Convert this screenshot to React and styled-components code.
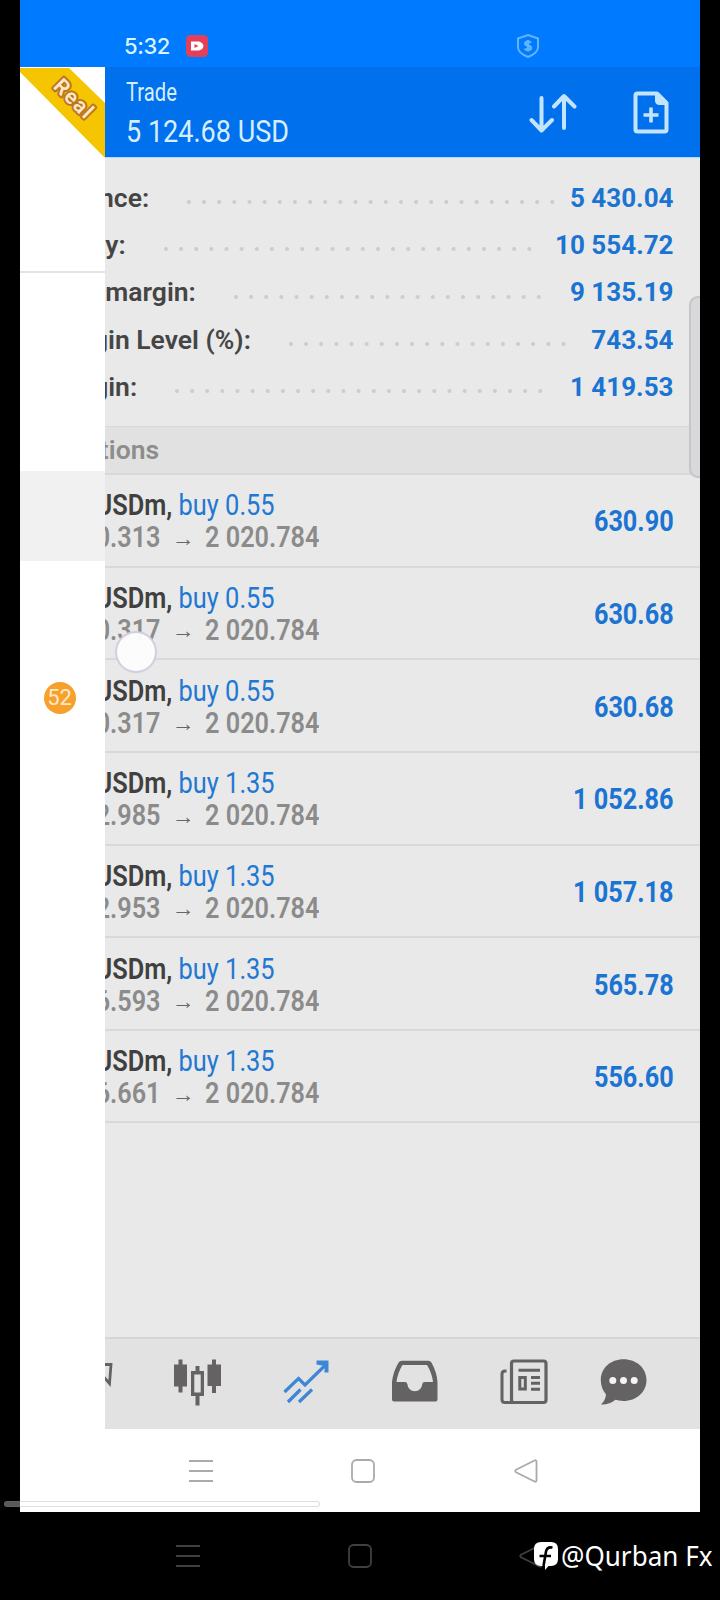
import React from 'react';
import styled, { createGlobalStyle } from 'styled-components';

const summary = [
	{ label: 'nce:', end: 44, dots: 25, value: '5 430.04' },
	{ label: 'ty:', end: 21, dots: 25, value: '10 554.72' },
	{ label: 'margin:', end: 91, dots: 21, value: '9 135.19' },
	{ label: 'gin Level (%):', end: 146, dots: 19, value: '743.54' },
	{ label: 'gin:', end: 32, dots: 25, value: '1 419.53' }
];

const positions = [
	{ volume: '0.55', open: '0.313', profit: '630.90' },
	{ volume: '0.55', open: '0.317', profit: '630.68' },
	{ volume: '0.55', open: '0.317', profit: '630.68' },
	{ volume: '1.35', open: '2.985', profit: '1 052.86' },
	{ volume: '1.35', open: '2.953', profit: '1 057.18' },
	{ volume: '1.35', open: '6.593', profit: '565.78' },
	{ volume: '1.35', open: '6.661', profit: '556.60' }
];

const RecordIcon = () => (
	<svg width="22" height="22" viewBox="0 0 22 22">
		<rect width="22" height="22" rx="4.5" fill="#e2405a" />
		<path d="M5 6.500h8q4 1 4.500 4.500-.5 3.500-4.500 4.500H5z" fill="#fff" />
		<path d="M8.500 9l4 2-4 2z" fill="#e2405a" />
	</svg>
);

const ShieldIcon = () => (
	<svg width="24" height="26" viewBox="0 0 24 26" fill="none" stroke="#62b4ff" strokeWidth="2">
		<path d="M12 2l10 3.500v9c0 4-4 7-10 9.500-6-2.500-10-5.500-10-9.500v-9z" />
		<path d="M14.800 9.800c-.5-1.300-5.600-1.700-5.600 1 0 2.400 5.800 1.400 5.800 4 0 2.900-5.400 2.400-6 .7M12 7v11.500" strokeWidth="2.400" />
	</svg>
);

const SortIcon = () => (
	<svg width="48" height="42" viewBox="0 0 48 42" fill="none" stroke="#c3e4ff" strokeWidth="4" strokeLinecap="round" strokeLinejoin="round">
		<path d="M12.500 6v32M2.500 28l10 10.500L23 28" />
		<path d="M35 36V4.500M25 14.500L35 4l10.500 10.500" />
	</svg>
);

const NewOrderIcon = () => (
	<svg width="36" height="43" viewBox="0 0 36 43" fill="none" stroke="#c3e4ff" strokeWidth="4" strokeLinejoin="round">
		<path d="M24 2.500H4.500q-2 0-2 2v34q0 2 2 2h27q2 0 2-2V12z" />
		<path d="M22.500 3v7q0 3.500 3.500 3.500h7z" fill="#c3e4ff" strokeWidth="1" />
		<path d="M18 16.500v15M10.500 24h15" strokeWidth="3.600" />
	</svg>
);

const QuotesIcon = () => (
	<svg width="8" height="50" viewBox="0 0 8 50" fill="none" stroke="#646263" strokeWidth="2.800">
		<path d="M-3 7.500H6L4.500 26.500L-2 19" />
	</svg>
);

const ChartIcon = () => (
	<svg width="50" height="50" viewBox="0 0 50 50" fill="#646263">
		<path d="M6.500 2.500h4v5h4.500v22h-4.500v6h-4v-6H2v-22h4.500z" />
		<path d="M40 2.500h4v5h5v21.500h-5v7h-4v-7h-4.500V7.500H40z" />
		<path d="M23.500 9h4v5h4.500v25h-4.500v9.500h-4V39H19V14h4.500zM22.300 17.500v18h6.400v-18z" fillRule="evenodd" />
	</svg>
);

const TradeIcon = () => (
	<svg width="50" height="50" viewBox="0 0 50 50" fill="none" stroke="#3d87d8" strokeWidth="3.200">
		<path d="M3.500 35L17.500 21.500L24 28L44 8.500" />
		<path d="M7 45L19.500 32.500M18 45L31 32.500" />
		<path d="M35.500 3.500H47.500V15.500H43.500V9L35.500 7.500z" fill="#3d87d8" stroke="none" />
	</svg>
);

const InboxIcon = () => (
	<svg width="50" height="50" viewBox="0 0 50 50" fill="#646263">
		<path
			fillRule="evenodd"
			d="M12 3.800H38q2.500 0 3.600 2Q47 16 47.500 25V42.500q0 2-2 2H4q-2 0-2-2V25Q3 15 8.500 5.800q1-2 3.500-2zM12.500 8Q7.500 16 6.500 25H15q2 0 2.300 2 1 7.200 7.500 7.200t7.500-7.200q.3-2 2.300-2H43Q42 16 37 8z"
		/>
	</svg>
);

const NewsIcon = () => (
	<svg width="50" height="50" viewBox="0 0 50 50" fill="none" stroke="#646263" strokeWidth="3.200">
		<rect x="12.500" y="4" width="34.500" height="41.500" rx="2.500" />
		<path d="M7.500 14H6q-3 0-3 3v25.500q0 3 3 3h9" strokeWidth="3" />
		<path d="M19.500 13.200H41M32 20.500h9M32 26.300h9M32 32.200h9" strokeWidth="3" />
		<rect x="20.800" y="20.500" width="5.500" height="11.500" strokeWidth="3" />
	</svg>
);

const ChatIcon = () => (
	<svg width="50" height="50" viewBox="0 0 50 50" fill="#646263">
		<path d="M24.500 2.200C37.500 2.200 47.500 11 47.500 23S37.500 44 24.500 44q-5-.2-8-1.200Q10 48 2 47.500 6.500 43.500 7 37.500 1.800 31 1.800 23C1.800 11 11.500 2.200 24.500 2.200z" />
		<g fill="#f4f4f4">
			<circle cx="13.800" cy="23.500" r="3.500" />
			<circle cx="24.500" cy="23.500" r="3.500" />
			<circle cx="35.200" cy="23.500" r="3.500" />
		</g>
	</svg>
);

const MenuKey = () => (
	<svg width="24" height="24" viewBox="0 0 24 24" fill="none" stroke="currentColor" strokeWidth="2">
		<path d="M0 2h24M0 12h24M0 22h24" />
	</svg>
);

const HomeKey = () => (
	<svg width="24" height="24" viewBox="0 0 24 24" fill="none" stroke="currentColor" strokeWidth="1.800">
		<rect x="1" y="1" width="22" height="22" rx="4.500" />
	</svg>
);

const BackKey = () => (
	<svg width="24" height="24" viewBox="0 0 24 24" fill="none" stroke="currentColor" strokeWidth="1.800" strokeLinejoin="round">
		<path d="M2 10.800L20.500 1.500q2-.8 2 1.200v18.600q0 2-2 1.200L2 13.200q-1.500-1.200 0-2.400z" />
	</svg>
);

const RibbonCorner = () => (
	<svg width="85" height="92" viewBox="0 0 85 92">
		<path d="M0 1H49L85 36V91L0 5z" fill="#f4c500" />
		<text
			transform="translate(54 32) rotate(45)"
			textAnchor="middle"
			dominantBaseline="central"
			fontFamily="Roboto, sans-serif"
			fontSize="21"
			fontWeight="600"
			letterSpacing="1.500"
			fill="#ffe9c9"
			stroke="#bd7620"
			strokeWidth="4"
			paintOrder="stroke"
			strokeLinejoin="round"
		>
			Real
		</text>
	</svg>
);

const PageLogo = () => (
	<svg width="26" height="28" viewBox="0 0 26 28">
		<path d="M8 0h10q7 0 7 7v10q0 7-7 7h-2.500L12 28V24H8q-7 0-7-7V7q0-7 7-7z" fill="#fff" />
		<path d="M19.500 5.500q-5.500-1-6.500 4L10.500 24M6.500 14H18" fill="none" stroke="#000" strokeWidth="2.600" />
	</svg>
);

export default function App() {
	return (
		<React.Fragment>
			<GlobalStyle />
			<Screen>
				<Phone>
					<StatusBar>
						<Clock>5:32</Clock>
						<RecordIcon />
						<ShieldSlot>
							<ShieldIcon />
						</ShieldSlot>
					</StatusBar>

					<Body>
						<Drawer>
							<DrawerHead>
								<RibbonCorner />
							</DrawerHead>
							<DrawerItem />
							<Badge>52</Badge>
						</Drawer>

						<Main>
							<AppBar>
								<Heading>
									<Title>Trade</Title>
									<Total>5 124.68 USD</Total>
								</Heading>
								<SortIcon />
								<NewOrderIcon />
							</AppBar>

							<Summary>
								{summary.map(row => (
									<SummaryRow key={row.value}>
										<Clip $width={row.end}>
											<Label>{row.label}</Label>
										</Clip>
										<Dots $count={row.dots} />
										<Amount>{row.value}</Amount>
									</SummaryRow>
								))}
							</Summary>

							<SectionTitle>
								<Clip $width={54}>
									<Label $muted>tions</Label>
								</Clip>
							</SectionTitle>

							{positions.map((p, i) => (
								<Position key={i}>
									<div>
										<Clip $width={170}>
											<Symbol>
												USDm, <span>buy {p.volume}</span>
											</Symbol>
										</Clip>
										<Prices>
											<Clip $width={56}>
												<Price>{p.open}</Price>
											</Clip>
											<Arrow>→</Arrow>
											<Clip $width={118}>
												<Price>2 020.784</Price>
											</Clip>
										</Prices>
									</div>
									<Profit>{p.profit}</Profit>
								</Position>
							))}

							<TabBar>
								<QuotesIcon />
								<ChartIcon />
								<TradeIcon />
								<InboxIcon />
								<NewsIcon />
								<ChatIcon />
							</TabBar>
						</Main>
					</Body>

					<KeyBar>
						<MenuKey />
						<HomeKey />
						<BackKey />
					</KeyBar>
				</Phone>

				<OuterKeys>
					<MenuKey />
					<HomeKey />
					<BackKey />
				</OuterKeys>

				<EdgeHandle />
				<Touch />
				<Progress />
				<Watermark>
					<PageLogo />
					<span>@Qurban Fx</span>
				</Watermark>
			</Screen>
		</React.Fragment>
	);
}

const GlobalStyle = createGlobalStyle`
	* {
		box-sizing: border-box;
	}
	body {
		margin: 0;
		background: #000;
		font-family: Roboto, sans-serif;
	}
	svg {
		display: block;
		flex: none;
	}
`;

const Screen = styled.div`
	position: relative;
	width: 720px;
	height: 1600px;
	overflow: hidden;
	background: #000;
`;

const Phone = styled.div`
	display: flex;
	flex-direction: column;
	width: 680px;
	height: 1512px;
	margin: 0 20px;
	background: #fff;
`;

const StatusBar = styled.div`
	display: flex;
	align-items: center;
	height: 67px;
	padding: 24px 0 0 104px;
	background: #007aff;
`;

const Clock = styled.div`
	width: 62px;
	color: #d8f4ff;
	font-family: Inter, sans-serif;
	font-size: 22px;
	font-weight: 550;
	letter-spacing: -.4px;
`;

const ShieldSlot = styled.div`
	margin-left: 308px;
`;

const Body = styled.div`
	display: flex;
	height: 1362px;
`;

const Drawer = styled.div`
	display: flex;
	flex-direction: column;
	flex: none;
	width: 85px;
`;

const DrawerHead = styled.div`
	height: 206px;
	border-bottom: 2px solid #e3e3e3;
`;

const DrawerItem = styled.div`
	height: 90px;
	margin-top: 198px;
	background: #f1f1f1;
`;

const Badge = styled.div`
	width: 32px;
	height: 32px;
	margin: 121px 0 0 23.5px;
	border-radius: 50%;
	background: #f7a02c;
	color: #ffe9c4;
	font-size: 22px;
	line-height: 32px;
	text-align: center;
`;

const Main = styled.div`
	display: flex;
	flex-direction: column;
	width: 595px;
	background: #e9e9e9;
`;

const AppBar = styled.div`
	display: flex;
	align-items: center;
	flex: none;
	height: 91px;
	padding: 1px 31px 0 21px;
	background: #0070ec;
	border-bottom: 1px solid #a5dcff;
	color: #d5eeff;
	svg + svg {
		margin-left: 56px;
	}
`;

const Heading = styled.div`
	flex: 1;
	padding-top: 2px;
`;

const Title = styled.div`
	font-size: 25px;
	line-height: 34px;
	transform: scaleX(.81);
	transform-origin: left;
`;

const Total = styled.div`
	font-size: 32px;
	line-height: 42px;
	white-space: nowrap;
	transform: scaleX(.845);
	transform-origin: left;
`;

const Summary = styled.div`
	flex: none;
	height: 268px;
	padding: 16px 26.5px 0 0;
`;

const SummaryRow = styled.div`
	display: flex;
	align-items: center;
	height: 47.3px;
`;

/* text keeps to the right edge, whatever the drawer covers is cut off */
const Clip = styled.div`
	display: flex;
	justify-content: flex-end;
	flex: none;
	width: ${props => props.$width}px;
	overflow: hidden;
`;

const Label = styled.span`
	flex: none;
	color: ${props => (props.$muted ? '#8d8d8d' : '#454545')};
	font-size: 26px;
	font-weight: 650;
	line-height: 36px;
	white-space: nowrap;
	transform: scaleX(1.02);
	transform-origin: right;
`;

const Dots = styled.div`
	width: ${props => props.$count * 15.15 - 10}px;
	height: 4px;
	margin: 9px 0 0 38px;
	background: radial-gradient(circle at 2px 2px, #cdcdcd 1.6px, transparent 2.3px) 0 0 / 15.15px 4px;
`;

const Amount = styled.span`
	margin-left: auto;
	color: #1b74d2;
	font-size: 26px;
	font-weight: 700;
	white-space: nowrap;
`;

const SectionTitle = styled.div`
	display: flex;
	align-items: center;
	flex: none;
	height: 49px;
	border-top: 1px solid #d8d8d8;
	border-bottom: 2px solid #d8d8d8;
	background: #e1e1e1;
`;

const Position = styled.div`
	display: flex;
	align-items: center;
	justify-content: space-between;
	flex: none;
	height: 92.65px;
	padding: 2px 26.5px 0 0;
	border-bottom: 2px solid #d9d9d9;
`;

const Symbol = styled.span`
	flex: none;
	color: #404040;
	font-size: 29px;
	font-weight: 600;
	line-height: 32px;
	white-space: nowrap;
	transform: scaleX(.875);
	transform-origin: right;
	span {
		color: #2178d2;
		font-weight: 450;
	}
`;

const Prices = styled.div`
	display: flex;
	align-items: center;
	height: 32px;
`;

const Price = styled.span`
	flex: none;
	color: #8b8b8b;
	font-size: 29px;
	font-weight: 600;
	line-height: 32px;
	white-space: nowrap;
	transform: scaleX(.87);
	transform-origin: right;
`;

const Arrow = styled.span`
	width: 40px;
	padding: 2px 0 0 4px;
	color: #666;
	font-family: "Liberation Sans", sans-serif;
	font-size: 23px;
	font-weight: 700;
	text-align: center;
`;

const Profit = styled.span`
	color: #1b74d2;
	font-size: 29px;
	font-weight: 700;
	white-space: nowrap;
	transform: scaleX(.87);
	transform-origin: right;
`;

const TabBar = styled.div`
	display: flex;
	flex: none;
	height: 92px;
	margin-top: auto;
	padding-top: 18px;
	border-top: 2px solid #d5d5d5;
	background: #e2e2e2;
	svg + svg {
		margin-left: 59px;
	}
	svg:nth-child(5) {
		margin-left: 58.5px;
	}
	svg:last-child {
		margin-left: 50px;
	}
`;

const KeyBar = styled.div`
	display: flex;
	justify-content: space-between;
	width: 349px;
	margin: 30px 0 0 168.5px;
	color: #aaa;
`;

const OuterKeys = styled.div`
	display: flex;
	justify-content: space-between;
	width: 367px;
	margin: 32px 0 0 176px;
	color: #404040;
`;

const EdgeHandle = styled.div`
	position: absolute;
	top: 296px;
	left: 689px;
	width: 11px;
	height: 182px;
	border: 2px solid #c6c6c8;
	border-right: 0;
	border-radius: 9px 0 0 9px;
	background: #d9d9db;
`;

const Touch = styled.div`
	position: absolute;
	top: 631px;
	left: 115px;
	width: 42px;
	height: 42px;
	border: 2px solid rgba(200, 196, 214, .8);
	border-radius: 50%;
	background: rgba(252, 252, 253, .97);
`;

const Progress = styled.div`
	position: absolute;
	top: 1501px;
	left: 4px;
	width: 316px;
	height: 6px;
	border: 1px solid rgba(128, 128, 128, .25);
	border-radius: 3px;
	background: rgba(255, 255, 255, .35);
`;

const Watermark = styled.div`
	position: absolute;
	top: 1538px;
	left: 533px;
	display: flex;
	align-items: center;
	color: #fff;
	font-family: "Noto Sans", sans-serif;
	font-size: 27px;
	line-height: 36px;
	white-space: nowrap;
	span {
		margin-left: 2px;
		transform: scaleX(.965);
		transform-origin: left;
	}
`;
